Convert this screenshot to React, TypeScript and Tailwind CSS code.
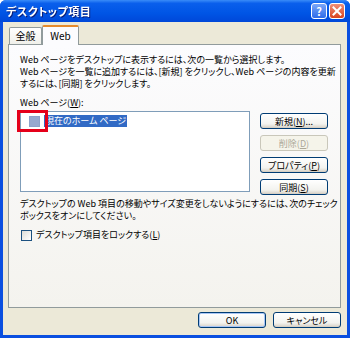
import React from 'react';

const font = { fontFamily: '"Noto Sans CJK JP", "Liberation Sans", sans-serif' };

const XpButton = ({ label, disabled }: { label: React.ReactNode; disabled?: boolean }) => (
  <div
    className={`h-[16px] w-[68px] rounded-[3px] border flex items-center justify-center text-[9px] leading-none whitespace-nowrap ${
      disabled
        ? 'border-[#C9C7BA] bg-[#F5F4EA] text-[#ACA899]'
        : 'border-[#003C74] bg-[linear-gradient(to_bottom,#FFFFFF,#F3F3EF_70%,#D6D0C5)] text-black shadow-[inset_0_-1px_0_#D6D0C5]'
    }`}
  >
    {label}
  </div>
);

export default function App() {
  return (
    <div className="w-[350px] h-[338px] bg-[#0A4FE0] flex flex-col overflow-hidden rounded-t-[6px] [font-feature-settings:'palt']" style={font}>
      {/* Title bar */}
      <div className="h-[22px] flex items-center justify-between pl-[6px] pr-[5px] bg-[linear-gradient(to_bottom,#3A8CF8_0%,#0A5FEC_15%,#0055E5_60%,#0047D8_100%)]">
        <span className="text-white font-bold text-[11px] leading-none tracking-[0.5px] drop-shadow-[1px_1px_0_#0A1E7A]">
          デスクトップ項目
        </span>
        <div className="flex gap-[2px] items-center">
          <div className="w-[16px] h-[16px] rounded-[3px] border border-white bg-[linear-gradient(to_bottom,#7AA7F8,#2E6BEA)] flex items-center justify-center text-white text-[11px] font-bold leading-none">
            ?
          </div>
          <div className="w-[16px] h-[16px] rounded-[3px] border border-white bg-[linear-gradient(to_bottom,#F0907A,#D8431E)] flex items-center justify-center">
            <svg width="10" height="10" viewBox="0 0 10 10">
              <path d="M1.5 1.5 L8.5 8.5 M8.5 1.5 L1.5 8.5" stroke="white" strokeWidth="2" strokeLinecap="square" />
            </svg>
          </div>
        </div>
      </div>

      {/* Body */}
      <div className="flex-1 mx-[3px] mb-[3px] bg-[#ECE9D8] flex flex-col pl-[5px] pr-[6px] pt-[2px]">
        {/* Tabs */}
        <div className="flex items-end h-[20px] pl-[1px]">
          <div className="h-[17px] w-[33px] border border-b-0 border-[#919B9C] rounded-t-[2px] bg-[linear-gradient(to_bottom,#FFFFFF,#F0F0EA)] flex items-center justify-center text-[10px] leading-none">
            全般
          </div>
          <div className="h-[20px] w-[37px] -mb-px relative z-10 border border-b-0 border-[#919B9C] border-t-[#E68B2C] border-t-2 rounded-t-[2px] bg-[#FCFCFE] flex items-center justify-center text-[10px] leading-none">
            Web
          </div>
        </div>

        {/* Panel */}
        <div className="h-[264px] border border-[#919B9C] bg-[linear-gradient(to_bottom,#FCFCFE,#F4F3EE)] flex flex-col pl-[11px] pt-[9px] text-[9px] leading-[12px] text-black whitespace-nowrap">
          <p>Web ページをデスクトップに表示するには、次の一覧から選択します。</p>
          <p>Web ページを一覧に追加するには、[新規] をクリックし、Web ページの内容を更新</p>
          <p>するには、[同期] をクリックします。</p>

          <p className="mt-[7px]">Web ページ(<span className="underline">W</span>):</p>

          <div className="flex mt-[2px]">
            <div className="relative w-[230px] h-[81px] border border-[#7F9DB9] bg-white">
              <div className="flex items-center gap-[4px] pl-[8px] pt-[3px]">
                <div className="w-[11px] h-[11px] border border-[#8DA2C9] bg-[#97A9CF]" />
                <span className="bg-[#316AC5] text-white px-[1px] h-[12px] flex items-center">現在のホーム ページ</span>
              </div>
              {/* red highlight frame */}
              <div className="absolute left-[-4px] top-[-2px] w-[31px] h-[22px] border-[3px] border-[#E5001A]" />
            </div>
            <div className="flex flex-col gap-[6px] ml-[10px] mt-[2px]">
              <XpButton label={<span>新規(<span className="underline">N</span>)...</span>} />
              <XpButton disabled label={<span>削除(<span className="underline">D</span>)</span>} />
              <XpButton label={<span>プロパティ(<span className="underline">P</span>)</span>} />
              <XpButton label={<span>同期(<span className="underline">S</span>)</span>} />
            </div>
          </div>

          <p className="mt-[3px]">デスクトップの Web 項目の移動やサイズ変更をしないようにするには、次のチェック</p>
          <p>ボックスをオンにしてください。</p>

          <div className="flex items-center gap-[4px] mt-[7px] pl-[1px]">
            <div className="w-[11px] h-[11px] border border-[#1C5180] bg-[linear-gradient(135deg,#DCDCD7,#FFFFFF)]" />
            <span>デスクトップ項目をロックする(<span className="underline">L</span>)</span>
          </div>
        </div>

        {/* Bottom buttons */}
        <div className="flex justify-end gap-[7px] mt-[4px]">
          <div className="h-[16px] w-[68px] rounded-[3px] border border-[#003C74] bg-[linear-gradient(to_bottom,#FFFFFF,#F3F3EF_70%,#D6D0C5)] shadow-[inset_0_0_0_1px_#A8C6F5] flex items-center justify-center text-[9px] leading-none">
            OK
          </div>
          <XpButton label="キャンセル" />
        </div>
      </div>
    </div>
  );
}
